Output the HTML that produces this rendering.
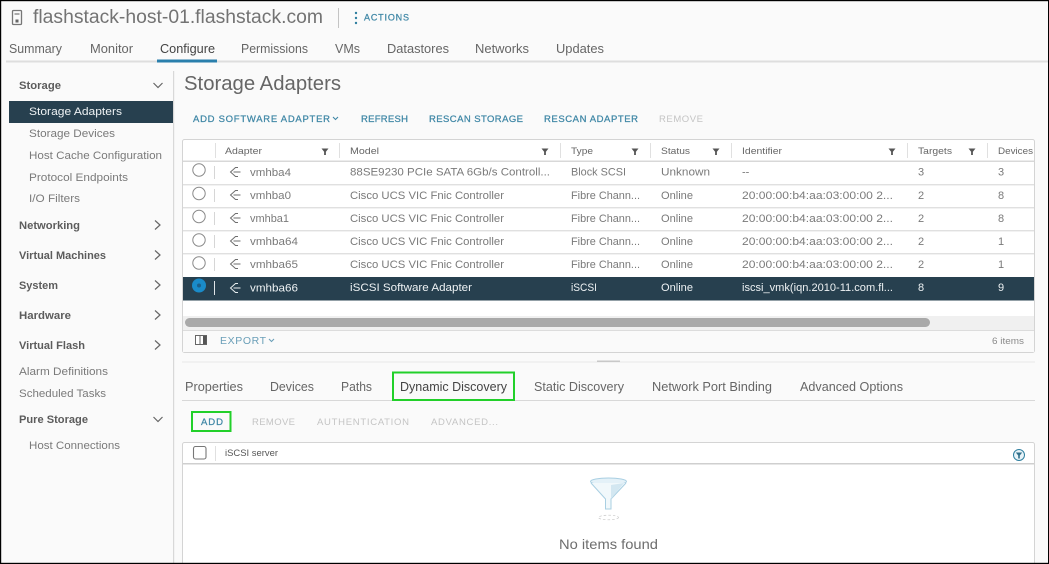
<!DOCTYPE html>
<html><head><meta charset="utf-8"><style>
html,body{margin:0;padding:0;background:#fafafa;width:1049px;height:564px;overflow:hidden}
svg{display:block;filter:blur(.35px)}
text{font-family:"Liberation Sans",sans-serif;fill:#666;font-size:11px}
.t{font-size:12.5px;fill:#666}
.h{font-weight:bold;fill:#5c5c5c;font-size:11px}
.s{fill:#7a7a7a;font-size:11px}
.b{font-size:9.5px;fill:#3f87a6;stroke:#3f87a6;stroke-width:.25px}
.g{font-size:9.5px;fill:#c4c4c4}
.th{font-size:9.5px;fill:#666}
.c{font-size:11px;fill:#7a7a7a}
.w{font-size:11px;fill:#eef2f4}
</style></head><body>
<svg width="1049" height="564" viewBox="0 0 1049 564" xmlns="http://www.w3.org/2000/svg">
<defs>
<g id="fl"><path d="M-3.5 -3H3.5L.9 .3V3.500H-.9V.3Z" fill="#555"/></g>
<g id="ad"><path d="M3 -4.500H.5L-4.500 0L.5 4.500H3M-1.500 0H5.500" fill="none" stroke="#6e6e6e" stroke-width="1"/></g>
<path id="cr" d="M-2.500 -4.500L2.500 0L-2.500 4.500" fill="none" stroke="#666" stroke-width="1.200"/>
<path id="cd" d="M-4.500 -2.500L0 2L4.500 -2.500" fill="none" stroke="#666" stroke-width="1.200"/>
</defs>
<rect width="1049" height="564" fill="#fafafa"/>

<!-- header -->
<rect x="12.500" y="10.500" width="9" height="14" rx="1" fill="none" stroke="#777" stroke-width="1.300"/>
<rect x="14.500" y="13" width="5" height="2" fill="#aaa"/><rect x="15.500" y="19.500" width="3" height="3" fill="#666"/>
<text x="33" y="23" style="font-size:19px;fill:#737373" textLength="290" lengthAdjust="spacingAndGlyphs">flashstack-host-01.flashstack.com</text>
<rect x="338" y="8" width="1" height="20" fill="#c4c4c4"/>
<circle cx="356" cy="13" r="1.200" fill="#2f7f9f"/><circle cx="356" cy="18" r="1.200" fill="#2f7f9f"/><circle cx="356" cy="23" r="1.200" fill="#2f7f9f"/>
<text x="364" y="20.500" class="b" style="font-size:9px" textLength="45" lengthAdjust="spacing">ACTIONS</text>

<text x="9" y="53" class="t" textLength="53" lengthAdjust="spacingAndGlyphs">Summary</text>
<text x="90" y="53" class="t" textLength="43" lengthAdjust="spacingAndGlyphs">Monitor</text>
<text x="160" y="53" class="t" style="fill:#444" textLength="55" lengthAdjust="spacingAndGlyphs">Configure</text>
<text x="241" y="53" class="t" textLength="67" lengthAdjust="spacingAndGlyphs">Permissions</text>
<text x="335" y="53" class="t" textLength="25" lengthAdjust="spacingAndGlyphs">VMs</text>
<text x="387" y="53" class="t" textLength="62" lengthAdjust="spacingAndGlyphs">Datastores</text>
<text x="475" y="53" class="t" textLength="54" lengthAdjust="spacingAndGlyphs">Networks</text>
<text x="556" y="53" class="t" textLength="48" lengthAdjust="spacingAndGlyphs">Updates</text>
<rect x="6" y="60.500" width="1043" height="2" fill="#dedede"/>
<rect x="157" y="59.500" width="60" height="3" fill="#2a7fac"/>

<!-- sidebar -->
<rect x="173" y="71" width="1.200" height="493" fill="#d8d8d8"/>
<text x="19" y="89" class="h" textLength="42" lengthAdjust="spacingAndGlyphs">Storage</text>
<use href="#cd" x="158" y="85.500"/>
<rect x="9" y="101" width="164" height="22" fill="#27404f"/>
<text x="29" y="115" class="w" textLength="93" lengthAdjust="spacingAndGlyphs">Storage Adapters</text>
<text x="29" y="137" class="s" textLength="86" lengthAdjust="spacingAndGlyphs">Storage Devices</text>
<text x="29" y="159" class="s" textLength="133" lengthAdjust="spacingAndGlyphs">Host Cache Configuration</text>
<text x="29" y="181" class="s" textLength="99" lengthAdjust="spacingAndGlyphs">Protocol Endpoints</text>
<text x="29" y="202" class="s" textLength="51" lengthAdjust="spacingAndGlyphs">I/O Filters</text>
<text x="19" y="229" class="h" textLength="61" lengthAdjust="spacingAndGlyphs">Networking</text><use href="#cr" x="157.500" y="225"/>
<text x="19" y="259" class="h" textLength="87" lengthAdjust="spacingAndGlyphs">Virtual Machines</text><use href="#cr" x="157.500" y="255"/>
<text x="19" y="289" class="h" textLength="39" lengthAdjust="spacingAndGlyphs">System</text><use href="#cr" x="157.500" y="285"/>
<text x="19" y="319" class="h" textLength="52" lengthAdjust="spacingAndGlyphs">Hardware</text><use href="#cr" x="157.500" y="315"/>
<text x="19" y="349" class="h" textLength="66" lengthAdjust="spacingAndGlyphs">Virtual Flash</text><use href="#cr" x="157.500" y="345"/>
<text x="19" y="375" class="s" textLength="89" lengthAdjust="spacingAndGlyphs">Alarm Definitions</text>
<text x="19" y="397" class="s" textLength="87" lengthAdjust="spacingAndGlyphs">Scheduled Tasks</text>
<text x="19" y="423" class="h" textLength="69" lengthAdjust="spacingAndGlyphs">Pure Storage</text><use href="#cd" x="158" y="419.500"/>
<text x="29" y="449" class="s" textLength="91" lengthAdjust="spacingAndGlyphs">Host Connections</text>

<!-- title + actions -->
<text x="184" y="90" style="font-size:20px;fill:#666" textLength="157" lengthAdjust="spacingAndGlyphs">Storage Adapters</text>
<text x="193" y="122" class="b" textLength="137" lengthAdjust="spacing">ADD SOFTWARE ADAPTER</text>
<path d="M333 117L335.500 119.500L338 117" fill="none" stroke="#3f87a6" stroke-width="1.100"/>
<text x="361" y="122" class="b" textLength="47" lengthAdjust="spacing">REFRESH</text>
<text x="429" y="122" class="b" textLength="94" lengthAdjust="spacing">RESCAN STORAGE</text>
<text x="544" y="122" class="b" textLength="94" lengthAdjust="spacing">RESCAN ADAPTER</text>
<text x="659" y="122" class="g" textLength="44" lengthAdjust="spacing">REMOVE</text>

<!-- table 1 -->
<rect x="182.500" y="139.500" width="852" height="213" rx="2" fill="#fff" stroke="#d4d4d4"/>
<rect x="183" y="160.500" width="851" height="1.500" fill="#d8d8d8"/>
<g fill="#e0e0e0">
<rect x="215" y="143" width="1" height="15"/><rect x="339" y="143" width="1" height="15"/><rect x="560" y="143" width="1" height="15"/><rect x="650" y="143" width="1" height="15"/><rect x="731" y="143" width="1" height="15"/><rect x="907" y="143" width="1" height="15"/><rect x="987" y="143" width="1" height="15"/>
<rect x="183" y="184" width="851" height="1.400"/><rect x="183" y="207" width="851" height="1.400"/><rect x="183" y="230" width="851" height="1.400"/><rect x="183" y="253" width="851" height="1.400"/>
</g>
<text x="225" y="154" class="th" textLength="37" lengthAdjust="spacingAndGlyphs">Adapter</text><use href="#fl" x="325" y="151.500"/>
<text x="350" y="154" class="th" textLength="29" lengthAdjust="spacingAndGlyphs">Model</text><use href="#fl" x="545" y="151.500"/>
<text x="571" y="154" class="th" textLength="22" lengthAdjust="spacingAndGlyphs">Type</text><use href="#fl" x="635" y="151.500"/>
<text x="661" y="154" class="th" textLength="29" lengthAdjust="spacingAndGlyphs">Status</text><use href="#fl" x="716" y="151.500"/>
<text x="742" y="154" class="th" textLength="40" lengthAdjust="spacingAndGlyphs">Identifier</text><use href="#fl" x="892" y="151.500"/>
<text x="918" y="154" class="th" textLength="34" lengthAdjust="spacingAndGlyphs">Targets</text><use href="#fl" x="972" y="151.500"/>
<text x="998" y="154" class="th" textLength="35" lengthAdjust="spacingAndGlyphs">Devices</text>

<rect x="183" y="277" width="851" height="23.500" fill="#27404f"/>
<g fill="#fff" stroke="#8a8a8a" stroke-width="1">
<circle cx="199" cy="170" r="6.200"/><circle cx="199" cy="193.500" r="6.200"/><circle cx="199" cy="216.500" r="6.200"/><circle cx="199" cy="240" r="6.200"/><circle cx="199" cy="263" r="6.200"/>
</g>
<circle cx="199" cy="285.500" r="7" fill="#1a8bc9"/><circle cx="199" cy="285.500" r="2" fill="#1c5f8a"/>
<g fill="#d6d6d6"><rect x="214" y="166" width="1" height="13"/><rect x="214" y="189" width="1" height="13"/><rect x="214" y="212" width="1" height="13"/><rect x="214" y="235" width="1" height="13"/><rect x="214" y="258" width="1" height="13"/></g>
<rect x="214" y="281" width="1" height="14" fill="#dfe5e8"/>
<use href="#ad" x="235" y="172"/><use href="#ad" x="235" y="195"/><use href="#ad" x="235" y="218"/><use href="#ad" x="235" y="241"/><use href="#ad" x="235" y="264"/>
<g transform="translate(235 288)"><path d="M3 -4.500H.5L-4.500 0L.5 4.500H3M-1.500 0H5.500" fill="none" stroke="#e8eef0" stroke-width="1"/></g>

<text x="250" y="176" class="c" textLength="41" lengthAdjust="spacingAndGlyphs">vmhba4</text>
<text x="350" y="175.500" class="c" textLength="200" lengthAdjust="spacingAndGlyphs">88SE9230 PCIe SATA 6Gb/s Controll...</text>
<text x="571" y="175.500" class="c" textLength="55" lengthAdjust="spacingAndGlyphs">Block SCSI</text>
<text x="661" y="175.500" class="c" textLength="49" lengthAdjust="spacingAndGlyphs">Unknown</text>
<text x="742" y="175.500" class="c">--</text><text x="918" y="175.500" class="c">3</text><text x="998" y="175.500" class="c">3</text>

<text x="250" y="199" class="c" textLength="41" lengthAdjust="spacingAndGlyphs">vmhba0</text>
<text x="350" y="199" class="c" textLength="154" lengthAdjust="spacingAndGlyphs">Cisco UCS VIC Fnic Controller</text>
<text x="571" y="199" class="c" textLength="69" lengthAdjust="spacingAndGlyphs">Fibre Chann...</text>
<text x="661" y="199" class="c" textLength="32" lengthAdjust="spacingAndGlyphs">Online</text>
<text x="742" y="199" class="c" textLength="151" lengthAdjust="spacingAndGlyphs">20:00:00:b4:aa:03:00:00 2...</text>
<text x="918" y="199" class="c">2</text><text x="998" y="199" class="c">8</text>

<text x="250" y="222" class="c" textLength="39" lengthAdjust="spacingAndGlyphs">vmhba1</text>
<text x="350" y="222" class="c" textLength="154" lengthAdjust="spacingAndGlyphs">Cisco UCS VIC Fnic Controller</text>
<text x="571" y="222" class="c" textLength="69" lengthAdjust="spacingAndGlyphs">Fibre Chann...</text>
<text x="661" y="222" class="c" textLength="32" lengthAdjust="spacingAndGlyphs">Online</text>
<text x="742" y="222" class="c" textLength="151" lengthAdjust="spacingAndGlyphs">20:00:00:b4:aa:03:00:00 2...</text>
<text x="918" y="222" class="c">2</text><text x="998" y="222" class="c">8</text>

<text x="250" y="245" class="c" textLength="48" lengthAdjust="spacingAndGlyphs">vmhba64</text>
<text x="350" y="245" class="c" textLength="154" lengthAdjust="spacingAndGlyphs">Cisco UCS VIC Fnic Controller</text>
<text x="571" y="245" class="c" textLength="69" lengthAdjust="spacingAndGlyphs">Fibre Chann...</text>
<text x="661" y="245" class="c" textLength="32" lengthAdjust="spacingAndGlyphs">Online</text>
<text x="742" y="245" class="c" textLength="151" lengthAdjust="spacingAndGlyphs">20:00:00:b4:aa:03:00:00 2...</text>
<text x="918" y="245" class="c">2</text><text x="998" y="245" class="c">1</text>

<text x="250" y="268" class="c" textLength="48" lengthAdjust="spacingAndGlyphs">vmhba65</text>
<text x="350" y="268" class="c" textLength="154" lengthAdjust="spacingAndGlyphs">Cisco UCS VIC Fnic Controller</text>
<text x="571" y="268" class="c" textLength="69" lengthAdjust="spacingAndGlyphs">Fibre Chann...</text>
<text x="661" y="268" class="c" textLength="32" lengthAdjust="spacingAndGlyphs">Online</text>
<text x="742" y="268" class="c" textLength="151" lengthAdjust="spacingAndGlyphs">20:00:00:b4:aa:03:00:00 2...</text>
<text x="918" y="268" class="c">2</text><text x="998" y="268" class="c">1</text>

<text x="250" y="291.500" class="w" textLength="48" lengthAdjust="spacingAndGlyphs">vmhba66</text>
<text x="350" y="291" class="w" textLength="122" lengthAdjust="spacingAndGlyphs">iSCSI Software Adapter</text>
<text x="571" y="291" class="w" textLength="26" lengthAdjust="spacingAndGlyphs">iSCSI</text>
<text x="661" y="291" class="w" textLength="32" lengthAdjust="spacingAndGlyphs">Online</text>
<text x="742" y="291" class="w" textLength="151" lengthAdjust="spacingAndGlyphs">iscsi_vmk(iqn.2010-11.com.fl...</text>
<text x="918" y="291" class="w">8</text><text x="998" y="291" class="w">9</text>

<rect x="183" y="316" width="851" height="14" fill="#f0f0f0"/>
<rect x="185" y="318" width="745" height="9" rx="4.500" fill="#a9a9a9"/>
<rect x="183" y="330" width="851" height="22" fill="#fafafa"/>
<rect x="183" y="330" width="851" height="1" fill="#dcdcdc"/>
<rect x="195.500" y="335.500" width="11" height="9" fill="#fff" stroke="#666"/><rect x="199.500" y="336" width="1" height="8" fill="#666"/><rect x="203" y="336" width="3.500" height="8" fill="#555"/>
<text x="220" y="344" style="font-size:10.500px;fill:#6a9fb8" textLength="46" lengthAdjust="spacing">EXPORT</text>
<path d="M269 339L271.500 341.500L274 339" fill="none" stroke="#6a9fb8" stroke-width="1.100"/>
<text x="992" y="344" class="th" style="fill:#8a8a8a" textLength="32" lengthAdjust="spacingAndGlyphs">6 items</text>

<!-- splitter -->
<rect x="182" y="361.500" width="853" height="1" fill="#e8e8e8"/>
<rect x="597" y="360.500" width="23" height="1.500" fill="#c8c8c8"/>

<!-- bottom tabs -->
<text x="185" y="391" class="t" textLength="58" lengthAdjust="spacingAndGlyphs">Properties</text>
<text x="270" y="391" class="t" textLength="44" lengthAdjust="spacingAndGlyphs">Devices</text>
<text x="341" y="391" class="t" textLength="31" lengthAdjust="spacingAndGlyphs">Paths</text>
<text x="400" y="391" class="t" style="fill:#444" textLength="107" lengthAdjust="spacingAndGlyphs">Dynamic Discovery</text>
<text x="534" y="391" class="t" textLength="90" lengthAdjust="spacingAndGlyphs">Static Discovery</text>
<text x="652" y="391" class="t" textLength="120" lengthAdjust="spacingAndGlyphs">Network Port Binding</text>
<text x="800" y="391" class="t" textLength="103" lengthAdjust="spacingAndGlyphs">Advanced Options</text>
<rect x="182" y="400" width="853" height="1" fill="#d8d8d8"/>
<rect x="393" y="372.500" width="121" height="27.500" fill="none" stroke="#22d02a" stroke-width="2"/>
<rect x="192" y="412" width="38.500" height="19" fill="none" stroke="#22d02a" stroke-width="2"/>

<text x="201" y="425" class="b" textLength="22" lengthAdjust="spacing">ADD</text>
<text x="252" y="425" class="g" textLength="43" lengthAdjust="spacing">REMOVE</text>
<text x="317" y="425" class="g" textLength="92" lengthAdjust="spacing">AUTHENTICATION</text>
<text x="431" y="425" class="g" textLength="67" lengthAdjust="spacing">ADVANCED...</text>

<!-- table 2 -->
<rect x="182.500" y="442.500" width="852" height="130" rx="2" fill="#fff" stroke="#d4d4d4"/>
<rect x="183" y="463" width="851" height="1.500" fill="#cfcfcf"/>
<rect x="193.500" y="446.500" width="12.500" height="12.500" rx="2" fill="#fff" stroke="#777" stroke-width="1.100"/>
<rect x="215" y="446" width="1" height="15" fill="#e0e0e0"/>
<text x="225" y="456" class="th" style="fill:#555" textLength="53" lengthAdjust="spacingAndGlyphs">iSCSI server</text>
<circle cx="1019" cy="455" r="5.500" fill="#e8f3f8" stroke="#2f7f9f" stroke-width="1"/>
<path d="M1015.800 452.500H1022.200L1019.800 455.500V458.500H1018.200V455.500Z" fill="#2f6f8a"/>

<!-- funnel -->
<ellipse cx="608.500" cy="481.500" rx="18" ry="3.500" fill="#e4f1f8" stroke="#a9cfe2" stroke-width="1"/>
<path d="M591 483L605.500 499V509H611V499L626 483" fill="#f1f8fb" stroke="#a9cfe2" stroke-width="1"/>
<path d="M611 485L624 483L611 499Z" fill="#d3e7f1"/>
<ellipse cx="608.500" cy="517.500" rx="10" ry="2.300" fill="none" stroke="#c8c8c8" stroke-width=".7" stroke-dasharray="2.500 2"/>
<text x="559" y="549" style="font-size:14px;fill:#6e6e6e" textLength="99" lengthAdjust="spacingAndGlyphs">No items found</text>

<!-- frame -->
<rect x="0" y="0" width="1049" height="1.200" fill="#000"/>
<rect x="0" y="0" width="1.200" height="564" fill="#000"/>
<rect x="0" y="562.800" width="1049" height="1.200" fill="#000"/>
<rect x="1048" y="0" width="1" height="564" fill="#000"/>
</svg>
</body></html>
